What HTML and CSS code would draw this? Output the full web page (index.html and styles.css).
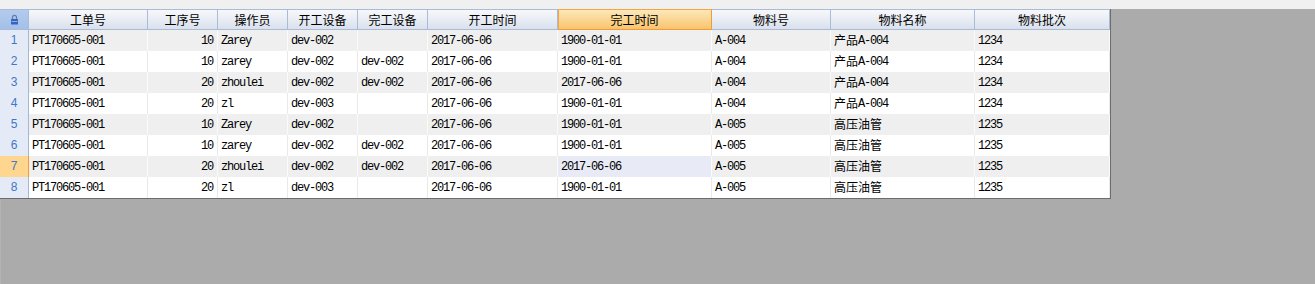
FILE: index.html
```html
<!DOCTYPE html>
<html lang="zh-CN">
<head>
<meta charset="utf-8">
<title>工单</title>
<link rel="stylesheet" href="styles.css">
</head>
<body>
<div class="strip"></div>
<div class="area">
  <div class="grid">
    <div class="row head">
      <div class="corner">
        <svg width="9" height="11" viewBox="0 0 9 11"><path d="M2.5 5.2V3.3a2 2 0 0 1 4 0v1.9" fill="none" stroke="#6a7896" stroke-width="1.2"/><rect x="1" y="5" width="7" height="5.5" rx="0.6" fill="#3463c6"/><rect x="1.5" y="7" width="6" height="1" fill="#8fb0ee"/></svg>
      </div>
      <div class="hc">工单号</div>
      <div class="hc">工序号</div>
      <div class="hc">操作员</div>
      <div class="hc">开工设备</div>
      <div class="hc">完工设备</div>
      <div class="hc">开工时间</div>
      <div class="hc sel">完工时间</div>
      <div class="hc">物料号</div>
      <div class="hc">物料名称</div>
      <div class="hc">物料批次</div>
    </div>

    <div class="row alt">
      <div class="rh">1</div><div class="c">PT170605-001</div><div class="c num">10</div><div class="c">Zarey</div><div class="c">dev-002</div><div class="c"></div><div class="c">2017-06-06</div><div class="c">1900-01-01</div><div class="c">A-004</div><div class="c"><span class="cjk">产品</span>A-004</div><div class="c">1234</div>
    </div>
    <div class="row">
      <div class="rh">2</div><div class="c">PT170605-001</div><div class="c num">10</div><div class="c">zarey</div><div class="c">dev-002</div><div class="c">dev-002</div><div class="c">2017-06-06</div><div class="c">1900-01-01</div><div class="c">A-004</div><div class="c"><span class="cjk">产品</span>A-004</div><div class="c">1234</div>
    </div>
    <div class="row alt">
      <div class="rh">3</div><div class="c">PT170605-001</div><div class="c num">20</div><div class="c">zhoulei</div><div class="c">dev-002</div><div class="c">dev-002</div><div class="c">2017-06-06</div><div class="c">2017-06-06</div><div class="c">A-004</div><div class="c"><span class="cjk">产品</span>A-004</div><div class="c">1234</div>
    </div>
    <div class="row">
      <div class="rh">4</div><div class="c">PT170605-001</div><div class="c num">20</div><div class="c">zl</div><div class="c">dev-003</div><div class="c"></div><div class="c">2017-06-06</div><div class="c">1900-01-01</div><div class="c">A-004</div><div class="c"><span class="cjk">产品</span>A-004</div><div class="c">1234</div>
    </div>
    <div class="row alt">
      <div class="rh">5</div><div class="c">PT170605-001</div><div class="c num">10</div><div class="c">Zarey</div><div class="c">dev-002</div><div class="c"></div><div class="c">2017-06-06</div><div class="c">1900-01-01</div><div class="c">A-005</div><div class="c"><span class="cjk">高压油管</span></div><div class="c">1235</div>
    </div>
    <div class="row">
      <div class="rh">6</div><div class="c">PT170605-001</div><div class="c num">10</div><div class="c">zarey</div><div class="c">dev-002</div><div class="c">dev-002</div><div class="c">2017-06-06</div><div class="c">1900-01-01</div><div class="c">A-005</div><div class="c"><span class="cjk">高压油管</span></div><div class="c">1235</div>
    </div>
    <div class="row alt current">
      <div class="rh">7</div><div class="c">PT170605-001</div><div class="c num">20</div><div class="c">zhoulei</div><div class="c">dev-002</div><div class="c">dev-002</div><div class="c">2017-06-06</div><div class="c focus">2017-06-06</div><div class="c">A-005</div><div class="c"><span class="cjk">高压油管</span></div><div class="c">1235</div>
    </div>
    <div class="row">
      <div class="rh">8</div><div class="c">PT170605-001</div><div class="c num">20</div><div class="c">zl</div><div class="c">dev-003</div><div class="c"></div><div class="c">2017-06-06</div><div class="c">1900-01-01</div><div class="c">A-005</div><div class="c"><span class="cjk">高压油管</span></div><div class="c">1235</div>
    </div>
  </div>
</div>
</body>
</html>
```

FILE: styles.css
```css
html, body {
  margin: 0;
  padding: 0;
}

body {
  background: #ababab;
  font-family: "Liberation Mono", "Noto Sans CJK SC", monospace;
  font-size: 12px;
  color: #000;
}

.strip {
  height: 9px;
  background: #f0f0f0;
}

.area {
  min-height: 275px;
  background: linear-gradient(to right, #b3b3b3 1px, #ababab 1px);
}

.grid {
  width: 1111px;
  box-sizing: border-box;
  border-right: 1px solid #6c6c6c;
  border-bottom: 1px solid #6c6c6c;
}

.row {
  display: grid;
  grid-template-columns: 29px 119px 70px 70px 70px 70px 130px 154px 119px 144px 135px;
  height: 21px;
  background: #ffffff;
}

.row.alt {
  background: #efefef;
}

.row > div {
  box-sizing: border-box;
  height: 21px;
  overflow: hidden;
  white-space: nowrap;
}

/* header */
.head > div {
  border-top: 1px solid #a8bcd7;
  border-bottom: 1px solid #a8bcd7;
  border-right: 1px solid #a8bcd7;
}

.hc {
  background: linear-gradient(#f7f8fb, #dae1ed);
  font-family: "Noto Sans CJK SC", "Liberation Sans", sans-serif;
  font-size: 12px;
  line-height: 19px;
  text-align: center;
  color: #000;
}

.hc.sel {
  background: linear-gradient(#fde8b9, #f8c46d);
  border-top-color: #f6a445;
  border-bottom-color: #f59a38;
  border-right-color: #f59a38;
  box-shadow: inset 1px 0 0 #f7a448;
}

.corner {
  background: linear-gradient(#b3cbee, #a4c0e8);
  display: flex;
  align-items: center;
  justify-content: center;
}

.corner svg {
  display: block;
}

/* row headers */
.rh {
  background: #e4ebf6;
  border-right: 1px solid #a3b8d5;
  color: #4177c6;
  font-family: "Liberation Sans", "DejaVu Sans", sans-serif;
  font-size: 12px;
  line-height: 21px;
  text-align: center;
}

.current .rh {
  background: #fed690;
  border-right-color: #f59a38;
}

/* data cells */
.c {
  padding: 1px 3px 0;
  line-height: 20px;
  letter-spacing: -1.2px;
  border-right: 1px solid #e9e9e9;
}

.alt .c {
  border-right-color: #fafafa;
}

.c.num {
  text-align: right;
  padding-right: 4px;
}

.c .cjk {
  display: inline-block;
  vertical-align: top;
  height: 20px;
  line-height: 18px;
  letter-spacing: 0;
  font-family: "Noto Sans CJK SC", sans-serif;
}

.c.focus {
  background: #e8eaf5;
}
```
